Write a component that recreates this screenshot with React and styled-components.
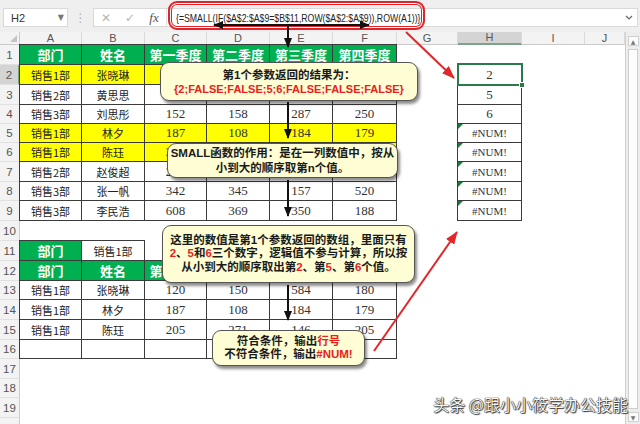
import React from "react";
import styled, { createGlobalStyle, css } from "styled-components";

const GlobalStyle = createGlobalStyle`
  html, body { margin: 0; padding: 0; background: #fff; }
  body { overflow: hidden; font-family: "Liberation Sans", "Noto Sans CJK SC", sans-serif; }
`;

const COLS = [62, 63, 62, 63, 63, 64, 61, 64, 63, 40];
const LETTERS = ["A", "B", "C", "D", "E", "F", "G", "H", "I", "J"];
const ROW_H = [20, 20, 20, 19, 19, 19, 20, 19, 20, 20, 20, 20, 19, 20, 20, 19, 20, 19, 20, 20];

const Y = "#ffff00";
const G = "#00b050";

const HEAD = ["部门", "姓名", "第一季度", "第二季度", "第三季度", "第四季度"];
const MAIN = [
  ["销售1部", "张晓琳", 120, 150, 584, 180, Y],
  ["销售2部", "黄思思", 233, 214, 196, 167],
  ["销售3部", "刘思彤", 152, 158, 287, 250],
  ["销售1部", "林夕", 187, 108, 184, 179, Y],
  ["销售1部", "陈珏", 205, 271, 146, 205, Y],
  ["销售2部", "赵俊超", 216, 302, 245, 198],
  ["销售3部", "张一帆", 342, 345, 157, 520],
  ["销售3部", "李民浩", 608, 369, 350, 188],
];
const RESULT = ["2", "5", "6", "#NUM!", "#NUM!", "#NUM!", "#NUM!", "#NUM!"];
const PICKED = [
  ["销售1部", "张晓琳", 120, 150, 584, 180],
  ["销售1部", "林夕", 187, 108, 184, 179],
  ["销售1部", "陈珏", 205, 271, 146, 205],
  ["", "", "", "", "", ""],
];

// sheet[row][letter] = cell spec
const buildSheet = () => {
  const s = {};
  const put = (r, l, c) => { s[r] = s[r] || {}; s[r][l] = { boxed: true, ...c }; };
  const headRow = (r) => HEAD.forEach((v, i) => put(r, LETTERS[i], { v, fill: G, head: true }));
  const dataRow = (r, vals, fill) =>
    vals.slice(0, 6).forEach((v, i) => put(r, LETTERS[i], { v, fill, num: typeof v === "number" }));

  headRow(1);
  MAIN.forEach((row, i) => dataRow(i + 2, row, row[6]));
  RESULT.forEach((v, i) =>
    put(i + 2, "H", { v, err: v === "#NUM!", flag: v === "#NUM!", num: v !== "#NUM!", sel: i === 0 })
  );
  put(11, "A", { v: "部门", fill: G, head: true });
  put(11, "B", { v: "销售1部" });
  headRow(12);
  PICKED.forEach((row, i) => dataRow(i + 13, row));
  return s;
};
const SHEET = buildSheet();

const Window = styled.div`
  position: relative;
  width: 640px;
  height: 424px;
  overflow: hidden;
  background: #fff;
  display: flex;
  flex-direction: column;
`;

const Toolbar = styled.div`
  height: 32px;
  flex: none;
  box-sizing: border-box;
  background: #efefef;
  display: flex;
  align-items: flex-start;
  padding: 8px 2px 0 3px;
`;

const NameBox = styled.div`
  width: 65px;
  height: 19px;
  box-sizing: border-box;
  background: #fff;
  border: 1px solid #d9d9d9;
  display: flex;
  align-items: center;
  justify-content: space-between;
  padding: 0 3px 0 7px;
  font: 11px "Liberation Sans", sans-serif;
  color: #333;
`;

const Caret = styled.span`
  font: 8px "DejaVu Sans", sans-serif;
  color: #777;
`;

const Dots = styled.div`
  width: 25px;
  height: 19px;
  display: flex;
  align-items: center;
  justify-content: center;
  color: #b0b0b0;
  font: 12px "DejaVu Sans", sans-serif;
`;

const FormulaBar = styled.div`
  flex: 1;
  height: 19px;
  box-sizing: border-box;
  background: #fff;
  border: 1px solid #d9d9d9;
  display: flex;
  align-items: center;
`;

const BarIcon = styled.span`
  width: 24px;
  flex: none;
  text-align: center;
  color: ${(p) => (p.$fx ? "#555" : "#b4b4b4")};
  font: ${(p) => (p.$fx ? 'italic 13px "Liberation Serif", serif' : '12px "DejaVu Sans", sans-serif')};
`;

const FormulaText = styled.div`
  flex: 1;
  height: 100%;
  display: flex;
  align-items: center;
  justify-content: space-between;
  padding: 0 4px 0 9px;
  border-left: 1px solid #e3e3e3;
  font: 10.5px "Liberation Sans", sans-serif;
  color: #222;
  white-space: nowrap;
`;

const Squeeze = styled.span`
  display: inline-block;
  transform: scaleX(0.83);
  transform-origin: left center;
`;

const Sheet = styled.div`
  flex: 1;
  min-height: 0;
  display: flex;
`;

const Grid = styled.div`
  width: 626px;
  flex: none;
  box-sizing: border-box;
  border-right: 1px solid #cfcfcf;
  display: grid;
  grid-template-columns: 20px ${COLS.map((c) => c + "px").join(" ")};
  grid-template-rows: 13px ${ROW_H.map((h) => h + "px").join(" ")};
  align-content: start;
`;

const Corner = styled.div`
  position: relative;
  background: #f3f3f3;
  border-right: 1px solid #cbcbcb;
  border-bottom: 1px solid #cbcbcb;
  &::after {
    content: "";
    position: absolute;
    right: 2px;
    bottom: 2px;
    border-left: 7px solid transparent;
    border-bottom: 7px solid #c4c4c4;
  }
`;

const ColHead = styled.div`
  box-sizing: border-box;
  background: ${(p) => (p.$on ? "#d4d4d4" : "#f3f3f3")};
  border-right: 1px solid #dadada;
  border-bottom: ${(p) => (p.$on ? "2px solid #79a487" : "1px solid #cbcbcb")};
  display: flex;
  align-items: center;
  justify-content: center;
  font: 11px/1 "Liberation Sans", sans-serif;
  color: #555;
`;

const RowHead = styled.div`
  box-sizing: border-box;
  background: ${(p) => (p.$on ? "#d4d4d4" : "#f3f3f3")};
  border-right: ${(p) => (p.$on ? "2px solid #79a487" : "1px solid #cbcbcb")};
  border-bottom: 1px solid #e0e0e0;
  display: flex;
  align-items: center;
  justify-content: center;
  padding-top: 2px;
  font: 11.5px/1 "Liberation Sans", sans-serif;
  color: #555;
`;

const Cell = styled.div`
  position: relative;
  box-sizing: border-box;
  display: flex;
  align-items: center;
  justify-content: center;
  white-space: nowrap;
  overflow: visible;
  background: ${(p) => p.$fill || "transparent"};
  font: 11px "Noto Sans CJK SC", sans-serif;
  color: #222;
  ${(p) => p.$boxed && css`
    border: 1px solid #3b3b3b;
    margin: -1px 0 0 -1px;
  `}
  ${(p) => p.$head && css`
    font: 700 13px "Noto Sans CJK SC", sans-serif;
    color: #fff;
  `}
  ${(p) => p.$num && css`
    font: 13px "Liberation Serif", serif;
    color: #333;
  `}
  ${(p) => p.$err && css`
    font: 11px "Liberation Serif", serif;
    color: #333;
  `}
  ${(p) => p.$flag && css`
    &::before {
      content: "";
      position: absolute;
      left: 0;
      top: 0;
      border-top: 5px solid #1f7a40;
      border-right: 5px solid transparent;
    }
  `}
  ${(p) => p.$sel && css`
    z-index: 2;
    &::after {
      content: "";
      position: absolute;
      left: -1px;
      top: -2px;
      right: -2px;
      bottom: -2px;
      border: 2px solid #2a7a4b;
    }
    &::before {
      content: "";
      position: absolute;
      right: -4px;
      bottom: -4px;
      width: 4px;
      height: 4px;
      background: #2a7a4b;
      border: 1px solid #fff;
      z-index: 1;
    }
  `}
`;

const VScroll = styled.div`
  flex: 1;
  background: #ededed;
  display: flex;
  flex-direction: column;
  align-items: center;
  padding: 4px 0 2px;
  box-sizing: border-box;
`;

const ScrollBtn = styled.div`
  width: 11px;
  height: 10px;
  flex: none;
  box-sizing: border-box;
  background: #fbfbfb;
  border: 1px solid #d0d0d0;
  display: flex;
  align-items: center;
  justify-content: center;
  font: 6px "DejaVu Sans", sans-serif;
  color: #777;
`;

const Thumb = styled.div`
  flex: 1;
  width: 8px;
  margin: 3px 0;
  background: #fdfdfd;
  border: 1px solid #cdcdcd;
`;

const RedFrame = styled.div`
  position: absolute;
  z-index: 3;
  left: 168px;
  top: 1px;
  width: 257px;
  height: 29px;
  box-sizing: border-box;
  border: 2px solid #e0252a;
  border-radius: 9px;
  box-shadow: inset 0 0 0 1px #fff, inset 0 0 0 2px #e0252a;
`;

const Arrows = styled.svg`
  position: absolute;
  z-index: 3;
  left: 0;
  top: 0;
  pointer-events: none;
`;

const Callout = styled.div`
  position: absolute;
  z-index: 4;
  left: ${(p) => p.$x}px;
  top: ${(p) => p.$y}px;
  width: ${(p) => p.$w}px;
  height: ${(p) => p.$h}px;
  box-sizing: border-box;
  background: #fefdd3;
  border: 1px solid #555;
  border-radius: 9px;
  box-shadow: 2px 3px 3px rgba(0, 0, 0, 0.45);
  display: flex;
  flex-direction: column;
  align-items: center;
  justify-content: center;
  font: 700 11.5px/${(p) => p.$lh}px "Liberation Sans", "Noto Sans CJK SC", sans-serif;
  color: #1a1a1a;
  text-align: center;
  white-space: nowrap;
`;

const Red = styled.span`
  color: #e8211c;
  font-size: ${(p) => (p.$small ? "11px" : "inherit")};
`;

const Watermark = styled.div`
  position: absolute;
  z-index: 5;
  right: 12px;
  bottom: 8px;
  font: 400 16px "Noto Sans CJK SC", sans-serif;
  color: #f7f7f7;
  text-shadow: 0 0 1px #111, 0 0 1px #111, 1px 1px 1px #444;
  white-space: nowrap;
`;

const App = () => (
  <>
    <GlobalStyle />
    <Window>
      <Toolbar>
        <NameBox>
          H2<Caret>▼</Caret>
        </NameBox>
        <Dots>⋮</Dots>
        <FormulaBar>
          <BarIcon>✕</BarIcon>
          <BarIcon>✓</BarIcon>
          <BarIcon $fx>fx</BarIcon>
          <FormulaText>
            <Squeeze>{"{=SMALL(IF($A$2:$A$9=$B$11,ROW($A$2:$A$9)),ROW(A1))}"}</Squeeze>
            <svg width="8" height="6" viewBox="0 0 8 6">
              <polyline points="1,1 4,4 7,1" fill="none" stroke="#666" strokeWidth="1.2" />
            </svg>
          </FormulaText>
        </FormulaBar>
      </Toolbar>

      <Sheet>
        <Grid>
          <Corner />
          {LETTERS.map((l) => (
            <ColHead key={l} $on={l === "H"}>{l}</ColHead>
          ))}
          {ROW_H.map((_, i) => {
            const r = i + 1;
            const row = SHEET[r] || {};
            return (
              <React.Fragment key={r}>
                <RowHead $on={r === 2}>{r}</RowHead>
                {LETTERS.map((l) => {
                  const c = row[l];
                  if (!c) return <Cell key={l} />;
                  return (
                    <Cell
                      key={l}
                      $boxed={c.boxed}
                      $fill={c.fill}
                      $head={c.head}
                      $num={c.num}
                      $err={c.err}
                      $flag={c.flag}
                      $sel={c.sel}
                    >
                      {c.v}
                    </Cell>
                  );
                })}
              </React.Fragment>
            );
          })}
        </Grid>
        <VScroll>
          <ScrollBtn>▲</ScrollBtn>
          <Thumb />
          <ScrollBtn>▼</ScrollBtn>
        </VScroll>
      </Sheet>

      <RedFrame />

      <Arrows width="640" height="424" viewBox="0 0 640 424">
        <defs>
          <marker id="hb" markerWidth="10" markerHeight="8" refX="9" refY="4" orient="auto-start-reverse" markerUnits="userSpaceOnUse">
            <path d="M0,0 L10,4 L0,8 Z" fill="#111" />
          </marker>
          <marker id="hr" markerWidth="13" markerHeight="10" refX="12" refY="5" orient="auto" markerUnits="userSpaceOnUse">
            <path d="M0,0 L13,5 L0,10 Z" fill="#e3262a" />
          </marker>
        </defs>
        <g stroke="#111" strokeWidth="2" fill="none">
          <path d="M214,25 L369,25" markerStart="url(#hb)" markerEnd="url(#hb)" />
          <path d="M288,25 L288,47" markerEnd="url(#hb)" />
          <path d="M288,102 L288,138" markerEnd="url(#hb)" />
          <path d="M288,180 L288,216" markerEnd="url(#hb)" />
          <path d="M288,285 L288,320" markerEnd="url(#hb)" />
        </g>
        <g stroke="#e3262a" strokeWidth="2" fill="none">
          <path d="M406,32 L454,78" markerEnd="url(#hr)" />
          <path d="M374,351 L457,232" markerEnd="url(#hr)" />
        </g>
      </Arrows>

      <Callout $x={160} $y={62} $w={258} $h={39} $lh={14}>
        <div>第1个参数返回的结果为：</div>
        <Red $small>{"{2;FALSE;FALSE;5;6;FALSE;FALSE;FALSE}"}</Red>
      </Callout>

      <Callout $x={167} $y={143} $w={231} $h={35} $lh={15}>
        <div>SMALL函数的作用：是在一列数值中，按从</div>
        <div>小到大的顺序取第n个值。</div>
      </Callout>

      <Callout $x={162} $y={225} $w={253} $h={58} $lh={13.5}>
        <div>这里的数值是第1个参数返回的数组，里面只有</div>
        <div>
          <Red>2</Red>、<Red>5</Red>和<Red>6</Red>三个数字，逻辑值不参与计算，所以按
        </div>
        <div>
          从小到大的顺序取出第<Red>2</Red>、第<Red>5</Red>、第<Red>6</Red>个值。
        </div>
      </Callout>

      <Callout $x={212} $y={330} $w={153} $h={36} $lh={13}>
        <div>
          符合条件，输出<Red>行号</Red>
        </div>
        <div>
          不符合条件，输出<Red>#NUM!</Red>
        </div>
      </Callout>

      <Watermark>头条 @跟小小筱学办公技能</Watermark>
    </Window>
  </>
);

export default App;
